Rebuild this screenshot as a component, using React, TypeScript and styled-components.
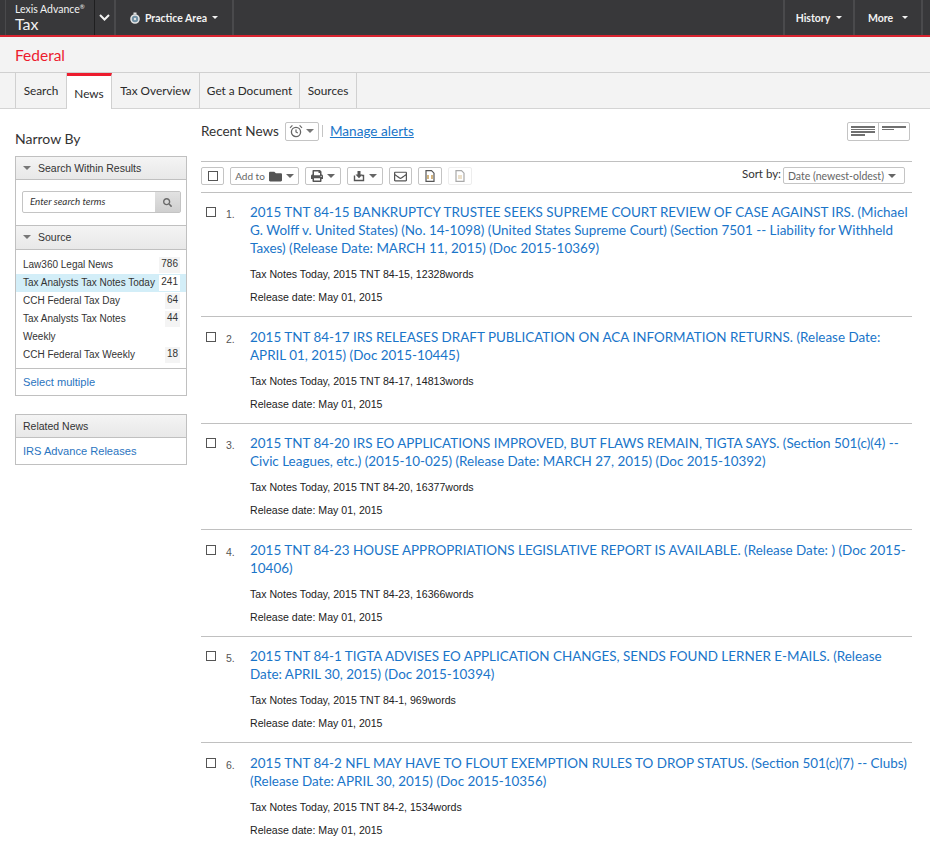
import * as React from 'react'
import styled, { createGlobalStyle } from 'styled-components'
import { FaFolder, FaPrint, FaRegEnvelope, FaSearch } from 'react-icons/fa'

const GlobalStyle = createGlobalStyle`
  html, body {
    margin: 0;
    padding: 0;
    background: #fff;
    font-family: 'Lato', 'Liberation Sans', sans-serif;
  }
  * { box-sizing: border-box; }
`

const Page = styled.div`
  width: 930px;
  height: 844px;
  overflow: hidden;
`

const TopBar = styled.header`
  height: 37px;
  display: flex;
  justify-content: space-between;
  padding-left: 5px;
  padding-right: 7px;
  background: #38383a;
  border-bottom: 2px solid #d8232f;
`

const TopGroup = styled.div`
  display: flex;
`

const TopCell = styled.div<{ $w: number; $gap?: number; $edge?: boolean }>`
  width: ${p => p.$w}px;
  height: 35px;
  display: flex;
  align-items: center;
  justify-content: center;
  gap: ${p => p.$gap ?? 5}px;
  color: #f2f2f2;
  font-size: 10.5px;
  font-weight: 700;
  border-right: 2px solid #4a4a4c;
  ${p => (p.$edge ? 'border-left: 2px solid #4a4a4c;' : '')}
`

const Brand = styled.div`
  width: 90px;
  height: 35px;
  padding: 3px 0 0 9px;
  color: #f2f2f2;
  border-right: 1px solid #1f1f20;
  border-left: 1px solid #4a4a4c;
`

const BrandTop = styled.div`
  font-size: 10.5px;
  line-height: 13px;
  sup {
    font-size: 6px;
    line-height: 0;
  }
`

const BrandName = styled.div`
  font-size: 16px;
  line-height: 15px;
`

const Caret = styled.span<{ $color?: string; $size?: number }>`
  display: inline-block;
  width: 0;
  height: 0;
  border-left: ${p => p.$size ?? 3}px solid transparent;
  border-right: ${p => p.$size ?? 3}px solid transparent;
  border-top: ${p => p.$size ?? 3}px solid ${p => p.$color ?? '#f2f2f2'};
`

const Section = styled.div`
  height: 36px;
  padding: 8px 0 0 15px;
  background: #f3f3f3;
  border-bottom: 1px solid #d0d0d0;
  color: #ed1c2e;
  font-size: 15.5px;
  line-height: 20px;
  font-weight: 400;
`

const Tabs = styled.nav`
  height: 36px;
  display: flex;
  padding-left: 15px;
  background: #f3f3f3;
  border-bottom: 1px solid #d4d4d4;
`

const Tab = styled.div<{ $w: number; $active?: boolean }>`
  width: ${p => p.$w}px;
  height: 35px;
  display: flex;
  align-items: center;
  justify-content: center;
  font-size: 11.8px;
  color: #2a2a2a;
  border-right: 1px solid #d0d0d0;
  ${p => (p.$active ? 'background:#fff;border-top:3px solid #ed1c2e;height:36px;padding-top:1px;' : 'padding-bottom:1px;')}
  &:first-child {
    border-left: 1px solid #d0d0d0;
  }
`

const Body = styled.div`
  display: flex;
  align-items: flex-start;
  padding: 0 18px 0 15px;
  gap: 14px;
`

const Side = styled.aside`
  width: 172px;
  flex: none;
  padding-top: 21px;
`

const SideTitle = styled.h2`
  margin: 0 0 8px;
  font-size: 14px;
  line-height: 18px;
  font-weight: 400;
  color: #333;
`

const Panel = styled.section`
  border: 1px solid #c0c0c0;
  margin-bottom: 18px;
  font-family: 'Liberation Sans', sans-serif;
`

const PanelHead = styled.div<{ $topBorder?: boolean }>`
  height: 23px;
  display: flex;
  align-items: center;
  padding-left: 7px;
  gap: 7px;
  font-size: 10.5px;
  color: #333;
  background: linear-gradient(#f4f4f4, #e8e8e8);
  border-bottom: 1px solid #c0c0c0;
  ${p => (p.$topBorder ? 'border-top:1px solid #c0c0c0;height:25px;padding-bottom:2px;' : '')}
`

const SearchBox = styled.div`
  height: 45px;
  padding: 11px 5px 0 6px;
`

const SearchInner = styled.div`
  height: 22px;
  display: flex;
  border: 1px solid #c4c4c4;
  border-radius: 2px;
`

const SearchText = styled.div`
  flex: 1;
  padding-left: 7px;
  font-family: 'Lato', sans-serif;
  font-size: 9.8px;
  font-style: italic;
  line-height: 19px;
  color: #333;
`

const SearchBtn = styled.div`
  width: 25px;
  display: flex;
  align-items: center;
  justify-content: center;
  color: #6a6a6a;
  font-size: 9px;
  background: linear-gradient(#e2e2e2, #cfcfcf);
`

const SourceList = styled.div`
  padding: 6px 0 4px;
  border-bottom: 1px solid #c0c0c0;
`

const SourceRow = styled.div<{ $active?: boolean }>`
  min-height: 18px;
  display: flex;
  justify-content: space-between;
  padding: 0 6px 0 7px;
  font-size: 10px;
  line-height: 18px;
  color: #333;
  background: ${p => (p.$active ? '#d3eef8' : 'transparent')};
`

const SourceName = styled.span<{ $wrap?: boolean }>`
  ${p => (p.$wrap ? 'width: 118px;' : 'white-space: nowrap;')}
`

const Count = styled.span<{ $active?: boolean }>`
  height: 16px;
  margin-top: 1px;
  padding: 0 2px;
  line-height: 14px;
  background: ${p => (p.$active ? '#fff' : '#f4f4f4')};
`

const SideLink = styled.div`
  height: 26px;
  padding-left: 7px;
  font-size: 11.1px;
  line-height: 26px;
  color: #2a74c0;
`

const Main = styled.main`
  width: 711px;
  flex: none;
  padding-top: 12px;
`

const RecentBar = styled.div`
  height: 41px;
  display: flex;
  align-items: flex-start;
  justify-content: space-between;
  border-bottom: 1px solid #c0c0c0;
`

const RecentLeft = styled.div`
  display: flex;
  align-items: center;
  height: 20px;
  font-size: 13.5px;
  color: #333;
`

const AlarmBtn = styled.div`
  width: 34px;
  height: 19px;
  margin-left: 6px;
  display: flex;
  align-items: center;
  justify-content: center;
  gap: 3px;
  border: 1px solid #c4c4c4;
  border-radius: 2px;
`

const Divider = styled.span`
  width: 1px;
  height: 12px;
  margin: 0 7px 0 3px;
  background: #c4c4c4;
`

const ManageLink = styled.a`
  font-size: 13.6px;
  color: #1a75c9;
  text-decoration: underline;
`

const ViewToggle = styled.div`
  width: 63px;
  height: 19px;
  margin: 1px 2px 0 0;
  display: flex;
  border: 1px solid #c4c4c4;
  border-radius: 2px;
`

const ViewPart = styled.div<{ $first?: boolean }>`
  width: 50%;
  padding: 3px 3px 0;
  ${p => (p.$first ? 'border-right:1px solid #c4c4c4;' : '')}
`

const ViewLine = styled.div<{ $w: number }>`
  width: ${p => p.$w}%;
  height: 1.5px;
  margin-bottom: 1.2px;
  background: #707070;
`

const Toolbar = styled.div`
  height: 31px;
  display: flex;
  align-items: flex-start;
  padding-top: 5px;
  gap: 6px;
  border-bottom: 1px solid #c0c0c0;
`

const ToolBtn = styled.div<{ $w: number; $off?: boolean }>`
  width: ${p => p.$w}px;
  height: 18px;
  display: flex;
  align-items: center;
  justify-content: center;
  gap: 4px;
  font-size: 10px;
  color: #666;
  border: 1px solid ${p => (p.$off ? '#dcdcdc' : '#c4c4c4')};
  border-radius: 2px;
  opacity: ${p => (p.$off ? 0.5 : 1)};
`

const CheckBox = styled.span`
  width: 10px;
  height: 10px;
  flex: none;
  border: 1px solid #555;
`

const SortWrap = styled.div`
  margin-left: auto;
  margin-right: 7px;
  display: flex;
  align-items: flex-start;
  gap: 2px;
  font-size: 11.5px;
  line-height: 13px;
  color: #333;
`

const SortSelect = styled.div`
  width: 122px;
  height: 17px;
  display: flex;
  align-items: center;
  justify-content: space-between;
  padding: 1px 8px 0 4px;
  font-size: 10.5px;
  color: #666;
  border: 1px solid #c4c4c4;
  border-radius: 2px;
`

const Row = styled.article`
  display: flex;
  padding: 10.6px 0 11px 5px;
  border-bottom: 1px solid #c0c0c0;
  &:first-of-type {
    padding-top: 10px;
    padding-bottom: 11px;
  }
  &:last-child {
    border-bottom: 0;
  }
`

const RowCheck = styled(CheckBox)`
  margin-top: 4px;
`

const RowNum = styled.div`
  width: 34px;
  flex: none;
  padding: 5px 0 0 10px;
  font-family: 'Liberation Sans', sans-serif;
  font-size: 10.5px;
  line-height: 12px;
  color: #555;
`

const RowBody = styled.div`
  flex: 1;
`

const Title = styled.a`
  display: block;
  font-size: 13.45px;
  line-height: 18px;
  color: #1a75c9;
`

const Meta = styled.div<{ $first?: boolean }>`
  margin-top: ${p => (p.$first ? 9 : 7)}px;
  font-family: 'Liberation Sans', sans-serif;
  font-size: 10.6px;
  line-height: 16px;
  color: #222;
`

function ChevronDown() {
  return (
    <svg width="11" height="7" viewBox="0 0 11 7">
      <path d="M1 1l4.5 4.5L10 1" fill="none" stroke="#f2f2f2" strokeWidth="2" />
    </svg>
  )
}

function PracticeIcon() {
  return (
    <svg width="10" height="12" viewBox="0 0 10 12">
      <circle cx="5" cy="7" r="4" fill="#6f8fa3" stroke="#e2e2e2" strokeWidth="1.6" />
      <circle cx="5" cy="7" r="1.2" fill="#e2e2e2" />
      <rect x="3.5" y="0.5" width="3" height="2" fill="#e2e2e2" />
    </svg>
  )
}

function AlarmIcon() {
  return (
    <svg width="14" height="14" viewBox="0 0 14 14" fill="none" stroke="#666">
      <circle cx="7" cy="8" r="4.6" strokeWidth="1.3" />
      <path d="M7 5.4V8l1.8 1M1 3.8L3.4 1.4M13 3.8L10.6 1.4" strokeWidth="1.2" />
    </svg>
  )
}

function ExportIcon() {
  return (
    <svg width="12" height="12" viewBox="0 0 12 12">
      <path d="M1.5 5.5v5h9v-5H8.5" fill="none" stroke="#555" strokeWidth="1.4" />
      <path d="M4.5 1h3v3.5h2L6 8.2 2.5 4.5h2z" fill="#555" />
    </svg>
  )
}

function DocIcon({ mark }: { mark: string }) {
  return (
    <svg width="10" height="12" viewBox="0 0 10 12">
      <path d="M1 .7h5.5L9 3.2v8.1H1z" fill="none" stroke="#555" strokeWidth="1.2" />
      <path d={mark} fill="none" stroke="#b8862e" strokeWidth="1.2" />
    </svg>
  )
}

const sources = [
  { name: 'Law360 Legal News', count: 786 },
  { name: 'Tax Analysts Tax Notes Today', count: 241, active: true },
  { name: 'CCH Federal Tax Day', count: 64 },
  { name: 'Tax Analysts Tax Notes Weekly', count: 44, wrap: true },
  { name: 'CCH Federal Tax Weekly', count: 18 },
]

const results = [
  {
    title:
      '2015 TNT 84-15 BANKRUPTCY TRUSTEE SEEKS SUPREME COURT REVIEW OF CASE AGAINST IRS. (Michael G. Wolff v. United States) (No. 14-1098) (United States Supreme Court) (Section 7501 -- Liability for Withheld Taxes) (Release Date: MARCH 11, 2015) (Doc 2015-10369)',
    meta: 'Tax Notes Today, 2015 TNT 84-15, 12328words',
  },
  {
    title:
      '2015 TNT 84-17 IRS RELEASES DRAFT PUBLICATION ON ACA INFORMATION RETURNS. (Release Date: APRIL 01, 2015) (Doc 2015-10445)',
    meta: 'Tax Notes Today, 2015 TNT 84-17, 14813words',
  },
  {
    title:
      '2015 TNT 84-20 IRS EO APPLICATIONS IMPROVED, BUT FLAWS REMAIN, TIGTA SAYS. (Section 501(c)(4) -- Civic Leagues, etc.) (2015-10-025) (Release Date: MARCH 27, 2015) (Doc 2015-10392)',
    meta: 'Tax Notes Today, 2015 TNT 84-20, 16377words',
  },
  {
    title:
      '2015 TNT 84-23 HOUSE APPROPRIATIONS LEGISLATIVE REPORT IS AVAILABLE. (Release Date: ) (Doc 2015-10406)',
    meta: 'Tax Notes Today, 2015 TNT 84-23, 16366words',
  },
  {
    title:
      '2015 TNT 84-1 TIGTA ADVISES EO APPLICATION CHANGES, SENDS FOUND LERNER E-MAILS. (Release Date: APRIL 30, 2015) (Doc 2015-10394)',
    meta: 'Tax Notes Today, 2015 TNT 84-1, 969words',
  },
  {
    title:
      '2015 TNT 84-2 NFL MAY HAVE TO FLOUT EXEMPTION RULES TO DROP STATUS. (Section 501(c)(7) -- Clubs) (Release Date: APRIL 30, 2015) (Doc 2015-10356)',
    meta: 'Tax Notes Today, 2015 TNT 84-2, 1534words',
  },
]

export default function App(): React.JSX.Element {
  return (
    <Page>
      <GlobalStyle />
      <TopBar>
        <TopGroup>
          <Brand>
            <BrandTop>
              Lexis Advance<sup>®</sup>
            </BrandTop>
            <BrandName>Tax</BrandName>
          </Brand>
          <TopCell $w={21}>
            <ChevronDown />
          </TopCell>
          <TopCell $w={118}>
            <PracticeIcon />
            Practice Area
            <Caret />
          </TopCell>
        </TopGroup>
        <TopGroup>
          <TopCell $w={72} $gap={6} $edge>
            History
            <Caret />
          </TopCell>
          <TopCell $w={68} $gap={9}>
            More
            <Caret />
          </TopCell>
        </TopGroup>
      </TopBar>
      <Section>Federal</Section>
      <Tabs>
        <Tab $w={52}>Search</Tab>
        <Tab $w={45} $active>News</Tab>
        <Tab $w={88}>Tax Overview</Tab>
        <Tab $w={100}>Get a Document</Tab>
        <Tab $w={57}>Sources</Tab>
      </Tabs>
      <Body>
        <Side>
          <SideTitle>Narrow By</SideTitle>
          <Panel>
            <PanelHead>
              <Caret $color="#777" $size={4} />
              Search Within Results
            </PanelHead>
            <SearchBox>
              <SearchInner>
                <SearchText>Enter search terms</SearchText>
                <SearchBtn>
                  <FaSearch />
                </SearchBtn>
              </SearchInner>
            </SearchBox>
            <PanelHead $topBorder>
              <Caret $color="#777" $size={4} />
              Source
            </PanelHead>
            <SourceList>
              {sources.map(s => (
                <SourceRow key={s.name} $active={s.active}>
                  <SourceName $wrap={s.wrap}>{s.name}</SourceName>
                  <Count $active={s.active}>{s.count}</Count>
                </SourceRow>
              ))}
            </SourceList>
            <SideLink>Select multiple</SideLink>
          </Panel>
          <Panel>
            <PanelHead>Related News</PanelHead>
            <SideLink>IRS Advance Releases</SideLink>
          </Panel>
        </Side>
        <Main>
          <RecentBar>
            <RecentLeft>
              Recent News
              <AlarmBtn>
                <AlarmIcon />
                <Caret $color="#777" $size={4} />
              </AlarmBtn>
              <Divider />
              <ManageLink>Manage alerts</ManageLink>
            </RecentLeft>
            <ViewToggle>
              <ViewPart $first>
                <ViewLine $w={100} />
                <ViewLine $w={100} />
                <ViewLine $w={100} />
                <ViewLine $w={60} />
              </ViewPart>
              <ViewPart>
                <ViewLine $w={100} />
                <ViewLine $w={50} />
              </ViewPart>
            </ViewToggle>
          </RecentBar>
          <Toolbar>
            <ToolBtn $w={23}>
              <CheckBox />
            </ToolBtn>
            <ToolBtn $w={69}>
              Add to
              <FaFolder size={13} color="#555" />
              <Caret $color="#666" $size={4} />
            </ToolBtn>
            <ToolBtn $w={36}>
              <FaPrint size={12} color="#555" />
              <Caret $color="#666" $size={4} />
            </ToolBtn>
            <ToolBtn $w={36}>
              <ExportIcon />
              <Caret $color="#666" $size={4} />
            </ToolBtn>
            <ToolBtn $w={23}>
              <FaRegEnvelope size={13} color="#555" />
            </ToolBtn>
            <ToolBtn $w={24}>
              <DocIcon mark="M3 5v4M7 5v4" />
            </ToolBtn>
            <ToolBtn $w={24} $off>
              <DocIcon mark="M3 6h4M3 8h4" />
            </ToolBtn>
            <SortWrap>
              <span>Sort by:</span>
              <SortSelect>
                Date (newest-oldest)
                <Caret $color="#666" $size={4} />
              </SortSelect>
            </SortWrap>
          </Toolbar>
          {results.map((r, i) => (
            <Row key={r.meta}>
              <RowCheck />
              <RowNum>{i + 1}.</RowNum>
              <RowBody>
                <Title>{r.title}</Title>
                <Meta $first>{r.meta}</Meta>
                <Meta>Release date: May 01, 2015</Meta>
              </RowBody>
            </Row>
          ))}
        </Main>
      </Body>
    </Page>
  )
}
